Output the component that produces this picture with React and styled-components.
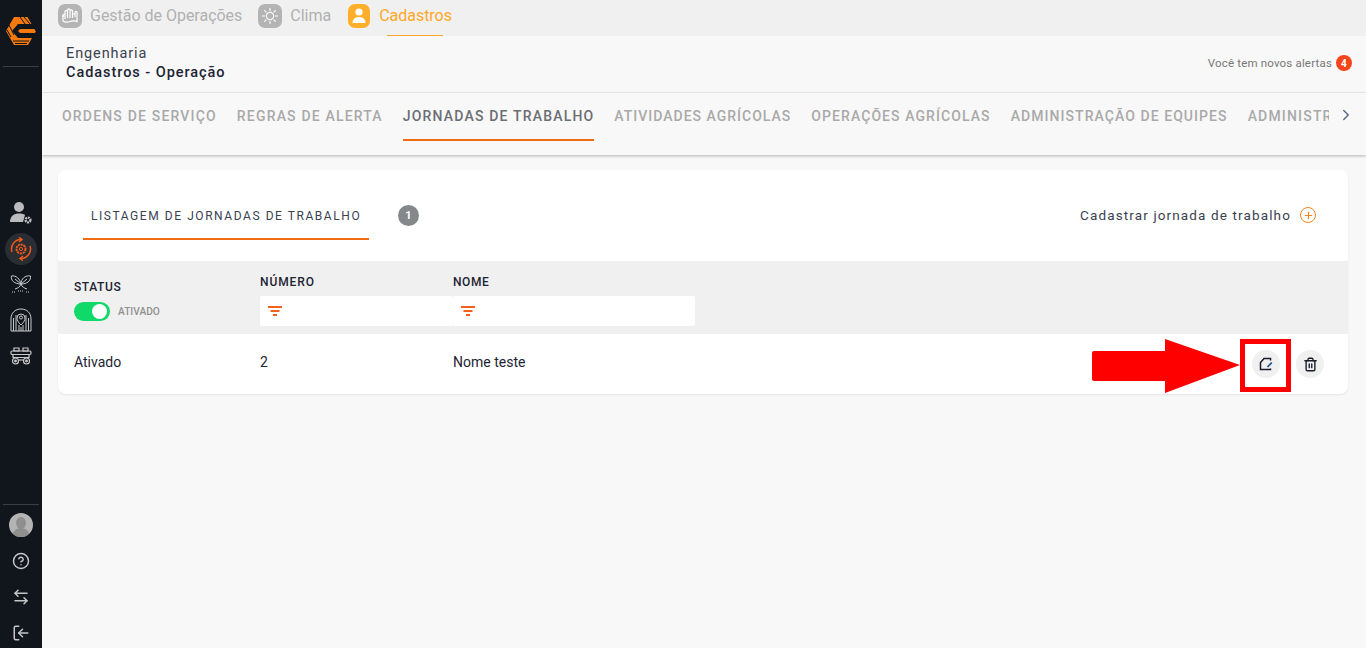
import React from "react";
import styled, { createGlobalStyle } from "styled-components";
import { ChevronRight, CircleHelp, ArrowLeftRight, LogIn, Plus, Trash2 } from "lucide-react";

const FONT = `"Roboto", "Liberation Sans", sans-serif`;

const GlobalStyle = createGlobalStyle`
  html, body { margin: 0; padding: 0; height: 100%; background: #f8f8f8; }
  body { font-family: ${FONT}; overflow: hidden; }
  * { box-sizing: border-box; }
`;

const Logo = () => (
  <svg width="30" height="30" viewBox="0 0 30 30">
    <path d="M8 1h14l8 14-8 14H8L0 15z" fill="#f47a10" />
    <path d="M12 8h18v5H14l-2 2 2 2h16v5H12l-6-7z" fill="#11161c" />
    <path d="M22 1l8 14M18 1l6 7M14 1l5 7M3 9l5 10M1 14l4 7M7 25h16M9 27.500h12" stroke="#11161c" strokeWidth="1" fill="none" />
  </svg>
);

const UserGear = () => (
  <svg width="24" height="24" viewBox="0 0 24 24">
    <circle cx="10" cy="7" r="5" fill="#b9bbbd" />
    <path d="M1 22c0-6 4-8.500 9-8.500 3 0 4.500.5 6 1.500l-2 7z" fill="#b9bbbd" />
    <circle cx="19" cy="20" r="2.400" fill="none" stroke="#b9bbbd" strokeWidth="2.400" strokeDasharray="1.800 .7" />
  </svg>
);

const Target = () => (
  <svg width="22" height="24" viewBox="0 0 22 24" fill="none" stroke="#f0591a" strokeWidth="1.500">
    <circle cx="11" cy="12" r="4.500" strokeDasharray="2.200 .7" strokeWidth="2" />
    <circle cx="11" cy="12" r="1.600" strokeWidth="1" />
    <path d="M2 15A9.500 9.500 0 0 1 11 2.500M20 9A9.500 9.500 0 0 1 11 21.500" />
    <path d="M9 .5l3 2L9 5M13 19l-3 2.500 3 2" />
  </svg>
);

const Plant = () => (
  <svg width="22" height="20" viewBox="0 0 22 20" fill="none" stroke="#c9cacc" strokeWidth="1">
    <path d="M11 10C10 5 6 1 1.500 2 .5 6 4 10 11 10zM11 10c0-5 4-9 9.500-8C21 7 17 10 11 10z" />
    <path d="M5 5l6 5M17 5l-6 5M11 10c-1 3-3 4-6 5M11 10c1 3 3 4 6 5" />
    <path d="M2 18h4M8 17h6M16 18h4" strokeDasharray="1 1" />
  </svg>
);

const Silo = () => (
  <svg width="22" height="24" viewBox="0 0 22 24" fill="none" stroke="#c9cacc" strokeWidth="1">
    <path d="M1 23V11C1 5 5 1 11 1s10 4 10 10v12zM3.500 23V10M6 23V7M16 23V7M18.500 23V10M9 23v-6M11 23v-4M13 23v-6" />
    <path d="M11 17c-3-3-4-5-4-7a4 4 0 0 1 8 0c0 2-1 4-4 7z" fill="#11161c" />
    <circle cx="11" cy="9.500" r="1.500" />
  </svg>
);

const Machine = () => (
  <svg width="22" height="20" viewBox="0 0 22 20" fill="none" stroke="#c9cacc" strokeWidth="1.200">
    <path d="M4 2h5v3H4zM13 2h5v3h-5z" />
    <rect x="1" y="5" width="20" height="3.500" rx="1.200" />
    <path d="M3 8.500v3h16v-3" />
    <circle cx="5.500" cy="15" r="3" />
    <circle cx="16.500" cy="15" r="3" />
    <circle cx="5.500" cy="15" r=".8" fill="#c9cacc" />
    <circle cx="16.500" cy="15" r=".8" fill="#c9cacc" />
    <path d="M8.500 14h5" />
  </svg>
);

const Hands = () => (
  <svg width="20" height="20" viewBox="0 0 20 20" fill="none" stroke="#fff" strokeWidth="1.200">
    <path d="M3 9v6c2 1.500 4 1.500 7 .5s5-1 7 0V6.500c0-1.500-2-1.500-2 0V11" />
    <path d="M3 11V9.500c0-1.500 2-1.500 2 0V13M5 11V5.500c0-1.500 2.500-1.500 2.500 0V12M7.500 10V4c0-1.500 2.500-1.500 2.500 0v8M10 10V5c0-1.500 2.500-1.500 2.500 0v7M12.500 8h2.500" />
  </svg>
);

const Sun = () => (
  <svg width="20" height="20" viewBox="0 0 20 20" fill="none" stroke="#fff" strokeWidth="1.100">
    <circle cx="10" cy="10" r="3.600" />
    <path d="M10 2v3M10 15v3M2 10h3M15 10h3M4.300 4.300l2.100 2.100M13.600 13.600l2.100 2.100M4.300 15.700l2.100-2.100M13.600 6.400l2.100-2.100" />
  </svg>
);

const Person = () => (
  <svg width="18" height="18" viewBox="0 0 18 18" fill="#fff">
    <circle cx="9" cy="5" r="3.600" />
    <path d="M2.500 16c0-4 3-6 6.500-6s6.500 2 6.500 6z" />
  </svg>
);

const FilterIcon = () => (
  <svg width="14" height="10" viewBox="0 0 14 10" fill="#f2601c">
    <rect x="0" y="0" width="14" height="2" />
    <rect x="2.500" y="4" width="9" height="2" />
    <rect x="5" y="8" width="4" height="2" />
  </svg>
);

const EditIcon = () => (
  <svg width="14" height="14" viewBox="0 0 14 14" fill="none" stroke="#161c2b" strokeWidth="1.500">
    <path d="M11.500 3.500V1.500H5L1.500 5.500v7h10v-1" strokeLinejoin="miter" />
    <path d="M12.800 5.500L8.500 10" stroke="#1d4f8c" strokeWidth="1.800" />
  </svg>
);

const Layout = styled.div`
  display: flex;
  height: 648px;
  width: 1366px;
  position: relative;
  overflow: hidden;
`;

const Sidebar = styled.aside`
  width: 42px;
  flex: none;
  background: #11161c;
  display: flex;
  flex-direction: column;
  align-items: center;
`;

const LogoBox = styled.div`
  height: 67px;
  width: 36px;
  display: flex;
  align-items: flex-start;
  justify-content: center;
  padding-top: 16px;
  border-bottom: 1px solid #3a3f44;
`;

const SideNav = styled.nav`
  margin-top: 129px;
  display: flex;
  flex-direction: column;
  align-items: center;
  gap: 4px;
`;

const SideItem = styled.div`
  width: 32px;
  height: 32px;
  border-radius: 50%;
  display: flex;
  align-items: center;
  justify-content: center;
  background: ${(p) => (p.$active ? "#2a2e33" : "transparent")};
  ${(p) => p.$active && "margin: 1px 0 -1px;"}
`;

const SideBottom = styled.div`
  margin-top: auto;
  width: 36px;
  border-top: 1px solid #3a3f44;
  display: flex;
  flex-direction: column;
  align-items: center;
  padding: 8px 0 6px;
  gap: 18px;
  color: #c4c5c7;
`;

const Avatar = styled.div`
  width: 24px;
  height: 24px;
  margin-bottom: -3px;
  border-radius: 50%;
  background: #b4b4b4;
  position: relative;
  overflow: hidden;
  &::before {
    content: "";
    position: absolute;
    left: 7px;
    top: 4px;
    width: 10px;
    height: 12px;
    border-radius: 50%;
    background: #8f8f8f;
  }
  &::after {
    content: "";
    position: absolute;
    left: 4px;
    top: 15px;
    width: 16px;
    height: 12px;
    border-radius: 50%;
    background: #8f8f8f;
  }
`;

const Main = styled.main`
  flex: 1;
  min-width: 0;
  display: flex;
  flex-direction: column;
`;

const TopBar = styled.div`
  height: 36px;
  flex: none;
  background: #f0f0f0;
  display: flex;
  align-items: flex-start;
  padding-left: 16px;
  gap: 16px;
`;

const TopItem = styled.div`
  display: flex;
  align-items: center;
  gap: 8px;
  height: 31px;
  position: relative;
  font-size: 16px;
  letter-spacing: -0.020px;
  color: ${(p) => (p.$active ? "#ffa726" : "#b1b1b1")};
  ${(p) =>
    p.$active &&
    `&::after {
      content: "";
      position: absolute;
      left: 40px;
      bottom: -5px;
      width: 56px;
      height: 1px;
      background: #ffa726;
    }`}
`;

const TopIcon = styled.span`
  width: ${(p) => (p.$active ? "22px" : "24px")};
  height: 24px;
  margin: ${(p) => (p.$active ? "0 1px" : "0")};
  border-radius: 7px;
  display: flex;
  align-items: center;
  justify-content: center;
  background: ${(p) => (p.$active ? "#ffae2b" : "#b4b4b4")};
`;

const Crumbs = styled.div`
  height: 57px;
  flex: none;
  display: flex;
  justify-content: space-between;
  padding: 8px 14px 0 24px;
  border-bottom: 1px solid #efefef;
`;

const CrumbText = styled.div`
  font-size: 14.500px;
  line-height: 19px;
  letter-spacing: 0.900px;
  color: #3a4250;
  & > b {
    display: block;
    font-weight: 500;
    letter-spacing: 0.950px;
    color: #1d2433;
  }
`;

const Alerts = styled.div`
  display: flex;
  align-items: center;
  gap: 4px;
  height: 20px;
  margin-top: 9px;
  font-size: 11.500px;
  letter-spacing: 0.180px;
  color: #777;
`;

const Badge = styled.span`
  width: 16px;
  height: 16px;
  border-radius: 50%;
  background: #f4451c;
  color: #fff;
  font-size: 10px;
  font-weight: 700;
  display: flex;
  align-items: center;
  justify-content: center;
`;

const TabsBar = styled.div`
  height: 62px;
  flex: none;
  display: flex;
  align-items: stretch;
  padding-left: 20px;
  box-shadow: 0 1px 3px rgba(0, 0, 0, 0.28);
  position: relative;
`;

const TabsTrack = styled.div`
  width: 1267px;
  overflow: hidden;
  display: flex;
  gap: 20px;
`;

const Tab = styled.div`
  flex: none;
  height: 48px;
  display: flex;
  align-items: center;
  font-size: 14px;
  font-weight: 500;
  letter-spacing: ${(p) => p.$spacing}px;
  white-space: nowrap;
  color: ${(p) => (p.$active ? "#6b6e73" : "#a9a9a9")};
  border-bottom: 2px solid ${(p) => (p.$active ? "#ef6c12" : "transparent")};
`;

const TabArrow = styled.div`
  height: 44px;
  margin-left: 8px;
  display: flex;
  align-items: center;
  color: #5b6a80;
`;

const Content = styled.div`
  flex: 1;
  padding: 15px 16px;
`;

const Card = styled.section`
  width: 1290px;
  background: #fff;
  border-radius: 8px;
  box-shadow: 0 1px 2px rgba(0, 0, 0, 0.08);
  overflow: hidden;
`;

const CardHeader = styled.div`
  height: 91px;
  display: flex;
  align-items: flex-start;
  justify-content: space-between;
  padding: 22px 32px 0 25px;
`;

const CardTitleGroup = styled.div`
  display: flex;
  align-items: flex-start;
  gap: 29px;
`;

const CardTitle = styled.div`
  width: 286px;
  height: 48px;
  padding: 2px 0 0 8px;
  display: flex;
  align-items: center;
  font-size: 12px;
  letter-spacing: 1.560px;
  color: #3a4250;
  border-bottom: 2px solid #ef6c12;
`;

const Count = styled.span`
  width: 21px;
  height: 21px;
  margin-top: 13px;
  border-radius: 50%;
  background: #85888b;
  color: #fff;
  font-size: 11px;
  font-weight: 700;
  display: flex;
  align-items: center;
  justify-content: center;
`;

const AddLink = styled.div`
  display: flex;
  align-items: center;
  gap: 9px;
  height: 46px;
  font-size: 13.500px;
  letter-spacing: 1.130px;
  color: #3a4250;
`;

const AddIcon = styled.span`
  width: 16px;
  height: 16px;
  border-radius: 50%;
  border: 1.500px solid #f5841f;
  color: #f5841f;
  display: flex;
  align-items: center;
  justify-content: center;
`;

const Columns = `
  display: grid;
  grid-template-columns: 186px 193px 242px 1fr;
  padding-left: 16px;
`;

const TableHead = styled.div`
  ${Columns}
  height: 73px;
  background: #f0f0f0;
`;

const HeadCell = styled.div`
  padding-top: ${(p) => (p.$status ? "19px" : "14px")};
  display: flex;
  flex-direction: column;
  gap: ${(p) => (p.$status ? "7px" : "6px")};
`;

const HeadLabel = styled.div`
  height: 15px;
  font-size: 12px;
  font-weight: 500;
  letter-spacing: ${(p) => (p.$wide ? "0.900px" : "0.600px")};
  color: #1d2433;
`;

const FilterBox = styled.div`
  height: 30px;
  background: #fff;
  border-radius: 2px;
  display: flex;
  align-items: center;
  padding-left: 8px;
`;

const StatusToggle = styled.div`
  display: flex;
  align-items: center;
  gap: 8px;
  font-size: 10.200px;
  font-weight: 500;
  color: #909090;
`;

const ToggleTrack = styled.span`
  width: 36px;
  height: 19px;
  border-radius: 10px;
  background: #0fd968;
  display: flex;
  align-items: center;
  justify-content: flex-end;
  padding-right: 3px;
  &::after {
    content: "";
    width: 15px;
    height: 15px;
    border-radius: 50%;
    background: #fff;
  }
`;

const TableRow = styled.div`
  ${Columns}
  height: 60px;
  align-items: center;
  font-size: 14px;
  color: #1d2433;
  padding-bottom: 4px;
`;

const RowActions = styled.div`
  display: flex;
  justify-content: flex-end;
  gap: 16px;
  padding-right: 24px;
  margin-top: 4px;
`;

const RoundButton = styled.button`
  width: 28px;
  height: 28px;
  padding: 0;
  border: 0;
  border-radius: 50%;
  background: #f0f0f0;
  color: #161c2b;
  display: flex;
  align-items: center;
  justify-content: center;
`;

const Highlight = styled.div`
  position: absolute;
  left: 1240px;
  top: 339px;
  width: 51px;
  height: 53px;
  border: 5px solid #ff0000;
`;

const Arrow = styled.svg`
  position: absolute;
  left: 1092px;
  top: 339px;
`;

const tabs = [
  { label: "ORDENS DE SERVIÇO", spacing: 1.18 },
  { label: "REGRAS DE ALERTA", spacing: 1.18 },
  { label: "JORNADAS DE TRABALHO", spacing: 1.18 },
  { label: "ATIVIDADES AGRÍCOLAS", spacing: 1.0 },
  { label: "OPERAÇÕES AGRÍCOLAS", spacing: 1.08 },
  { label: "ADMINISTRAÇÃO DE EQUIPES", spacing: 1.06 },
  { label: "ADMINISTRAÇÃO", spacing: 1.18 },
];

export default function App() {
  return (
    <Layout>
      <GlobalStyle />
      <Sidebar>
        <LogoBox>
          <Logo />
        </LogoBox>
        <SideNav>
          <SideItem><UserGear /></SideItem>
          <SideItem $active><Target /></SideItem>
          <SideItem><Plant /></SideItem>
          <SideItem><Silo /></SideItem>
          <SideItem><Machine /></SideItem>
        </SideNav>
        <SideBottom>
          <Avatar />
          <CircleHelp size={18} strokeWidth={2} />
          <ArrowLeftRight size={18} strokeWidth={2} />
          <LogIn size={18} strokeWidth={2} style={{ transform: "scaleX(-1)" }} />
        </SideBottom>
      </Sidebar>
      <Main>
        <TopBar>
          <TopItem><TopIcon><Hands /></TopIcon>Gestão de Operações</TopItem>
          <TopItem><TopIcon><Sun /></TopIcon>Clima</TopItem>
          <TopItem $active><TopIcon $active><Person /></TopIcon>Cadastros</TopItem>
        </TopBar>
        <Crumbs>
          <CrumbText>
            Engenharia
            <b>Cadastros - Operação</b>
          </CrumbText>
          <Alerts>
            Você tem novos alertas
            <Badge>4</Badge>
          </Alerts>
        </Crumbs>
        <TabsBar>
          <TabsTrack>
            {tabs.map((t, i) => (
              <Tab key={t.label} $active={i === 2} $spacing={t.spacing}>{t.label}</Tab>
            ))}
          </TabsTrack>
          <TabArrow><ChevronRight size={18} /></TabArrow>
        </TabsBar>
        <Content>
          <Card>
            <CardHeader>
              <CardTitleGroup>
                <CardTitle>LISTAGEM DE JORNADAS DE TRABALHO</CardTitle>
                <Count>1</Count>
              </CardTitleGroup>
              <AddLink>
                Cadastrar jornada de trabalho
                <AddIcon><Plus size={11} strokeWidth={2.5} /></AddIcon>
              </AddLink>
            </CardHeader>
            <TableHead>
              <HeadCell $status>
                <HeadLabel>STATUS</HeadLabel>
                <StatusToggle><ToggleTrack />ATIVADO</StatusToggle>
              </HeadCell>
              <HeadCell>
                <HeadLabel $wide>NÚMERO</HeadLabel>
                <FilterBox><FilterIcon /></FilterBox>
              </HeadCell>
              <HeadCell>
                <HeadLabel>NOME</HeadLabel>
                <FilterBox><FilterIcon /></FilterBox>
              </HeadCell>
            </TableHead>
            <TableRow>
              <span>Ativado</span>
              <span>2</span>
              <span>Nome teste</span>
              <RowActions>
                <RoundButton aria-label="Editar"><EditIcon /></RoundButton>
                <RoundButton aria-label="Excluir"><Trash2 size={15} strokeWidth={2.200} /></RoundButton>
              </RowActions>
            </TableRow>
          </Card>
        </Content>
      </Main>
      <Arrow width="150" height="56" viewBox="0 0 150 56">
        <path d="M2 12H73V0L148 26 73 54V42H2a2 2 0 0 1-2-2V14a2 2 0 0 1 2-2z" fill="#ff0000" />
      </Arrow>
      <Highlight />
    </Layout>
  );
}
